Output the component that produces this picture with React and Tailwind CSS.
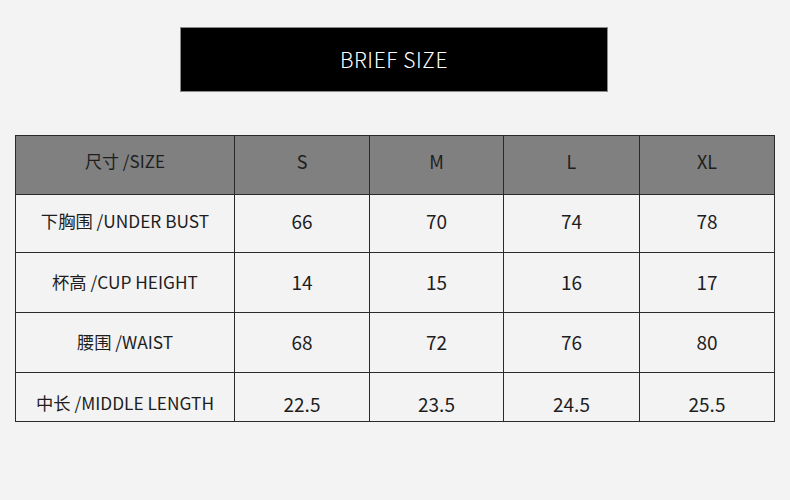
// 尺码表
const font = { fontFamily: '"Noto Sans CJK SC", "Noto Sans", sans-serif' }

const cols = ['S', 'M', 'L', 'XL']

const rows = [
  { label: '下胸围 /UNDER BUST', values: ['66', '70', '74', '78'], h: 'h-[57px]', lp: 'pb-[5px]', vp: 'pb-[5px]' },
  { label: '杯高 /CUP HEIGHT', values: ['14', '15', '16', '17'], h: 'h-[59px]', lp: 'pb-[1px]', vp: 'pb-[1px]' },
  { label: '腰围 /WAIST', values: ['68', '72', '76', '80'], h: 'h-[59px]', lp: 'pb-[1px]', vp: 'pb-[1px]' },
  { label: '中长 /MIDDLE LENGTH', values: ['22.5', '23.5', '24.5', '25.5'], h: 'h-[48px]', lp: 'pt-[12px]', vp: 'pt-[15px]' },
]

export default function App() {
  return (
    <div className="w-[790px] h-[500px] bg-[#f3f3f3] text-[#1e1e1e] overflow-hidden" style={font}>
      {/* Заголовок */}
      <div className="pt-[27px] pl-[180px]">
        <div className="w-[428px] h-[65px] bg-black border border-[#8a8a8a] flex items-center justify-center">
          <span className="text-white text-[21px] font-light tracking-[0.6px] pt-[1px]">BRIEF SIZE</span>
        </div>
      </div>

      {/* Таблица */}
      <div className="mt-[43px] ml-[15px] w-[760px] grid grid-cols-[218px_134px_133px_135px_134px] gap-px p-px bg-[#2a2a2a]">
        <div className="h-[58px] bg-[#808080] flex items-center justify-center text-[17px] pb-[8px]">尺寸 /SIZE</div>
        {cols.map((c) => (
          <div key={c} className="h-[58px] bg-[#808080] flex items-center justify-center text-[18px] pb-[8px]">
            {c}
          </div>
        ))}

        {rows.map((r) => (
          <>
            <div
              key={r.label}
              className={`${r.h} bg-[#f3f3f3] flex items-center justify-center text-[17.3px] ${r.lp}`}
            >
              {r.label}
            </div>
            {r.values.map((v, i) => (
              <div
                key={r.label + i}
                className={`${r.h} bg-[#f3f3f3] flex items-center justify-center text-[19px] ${r.vp}`}
              >
                {v}
              </div>
            ))}
          </>
        ))}
      </div>
    </div>
  )
}
